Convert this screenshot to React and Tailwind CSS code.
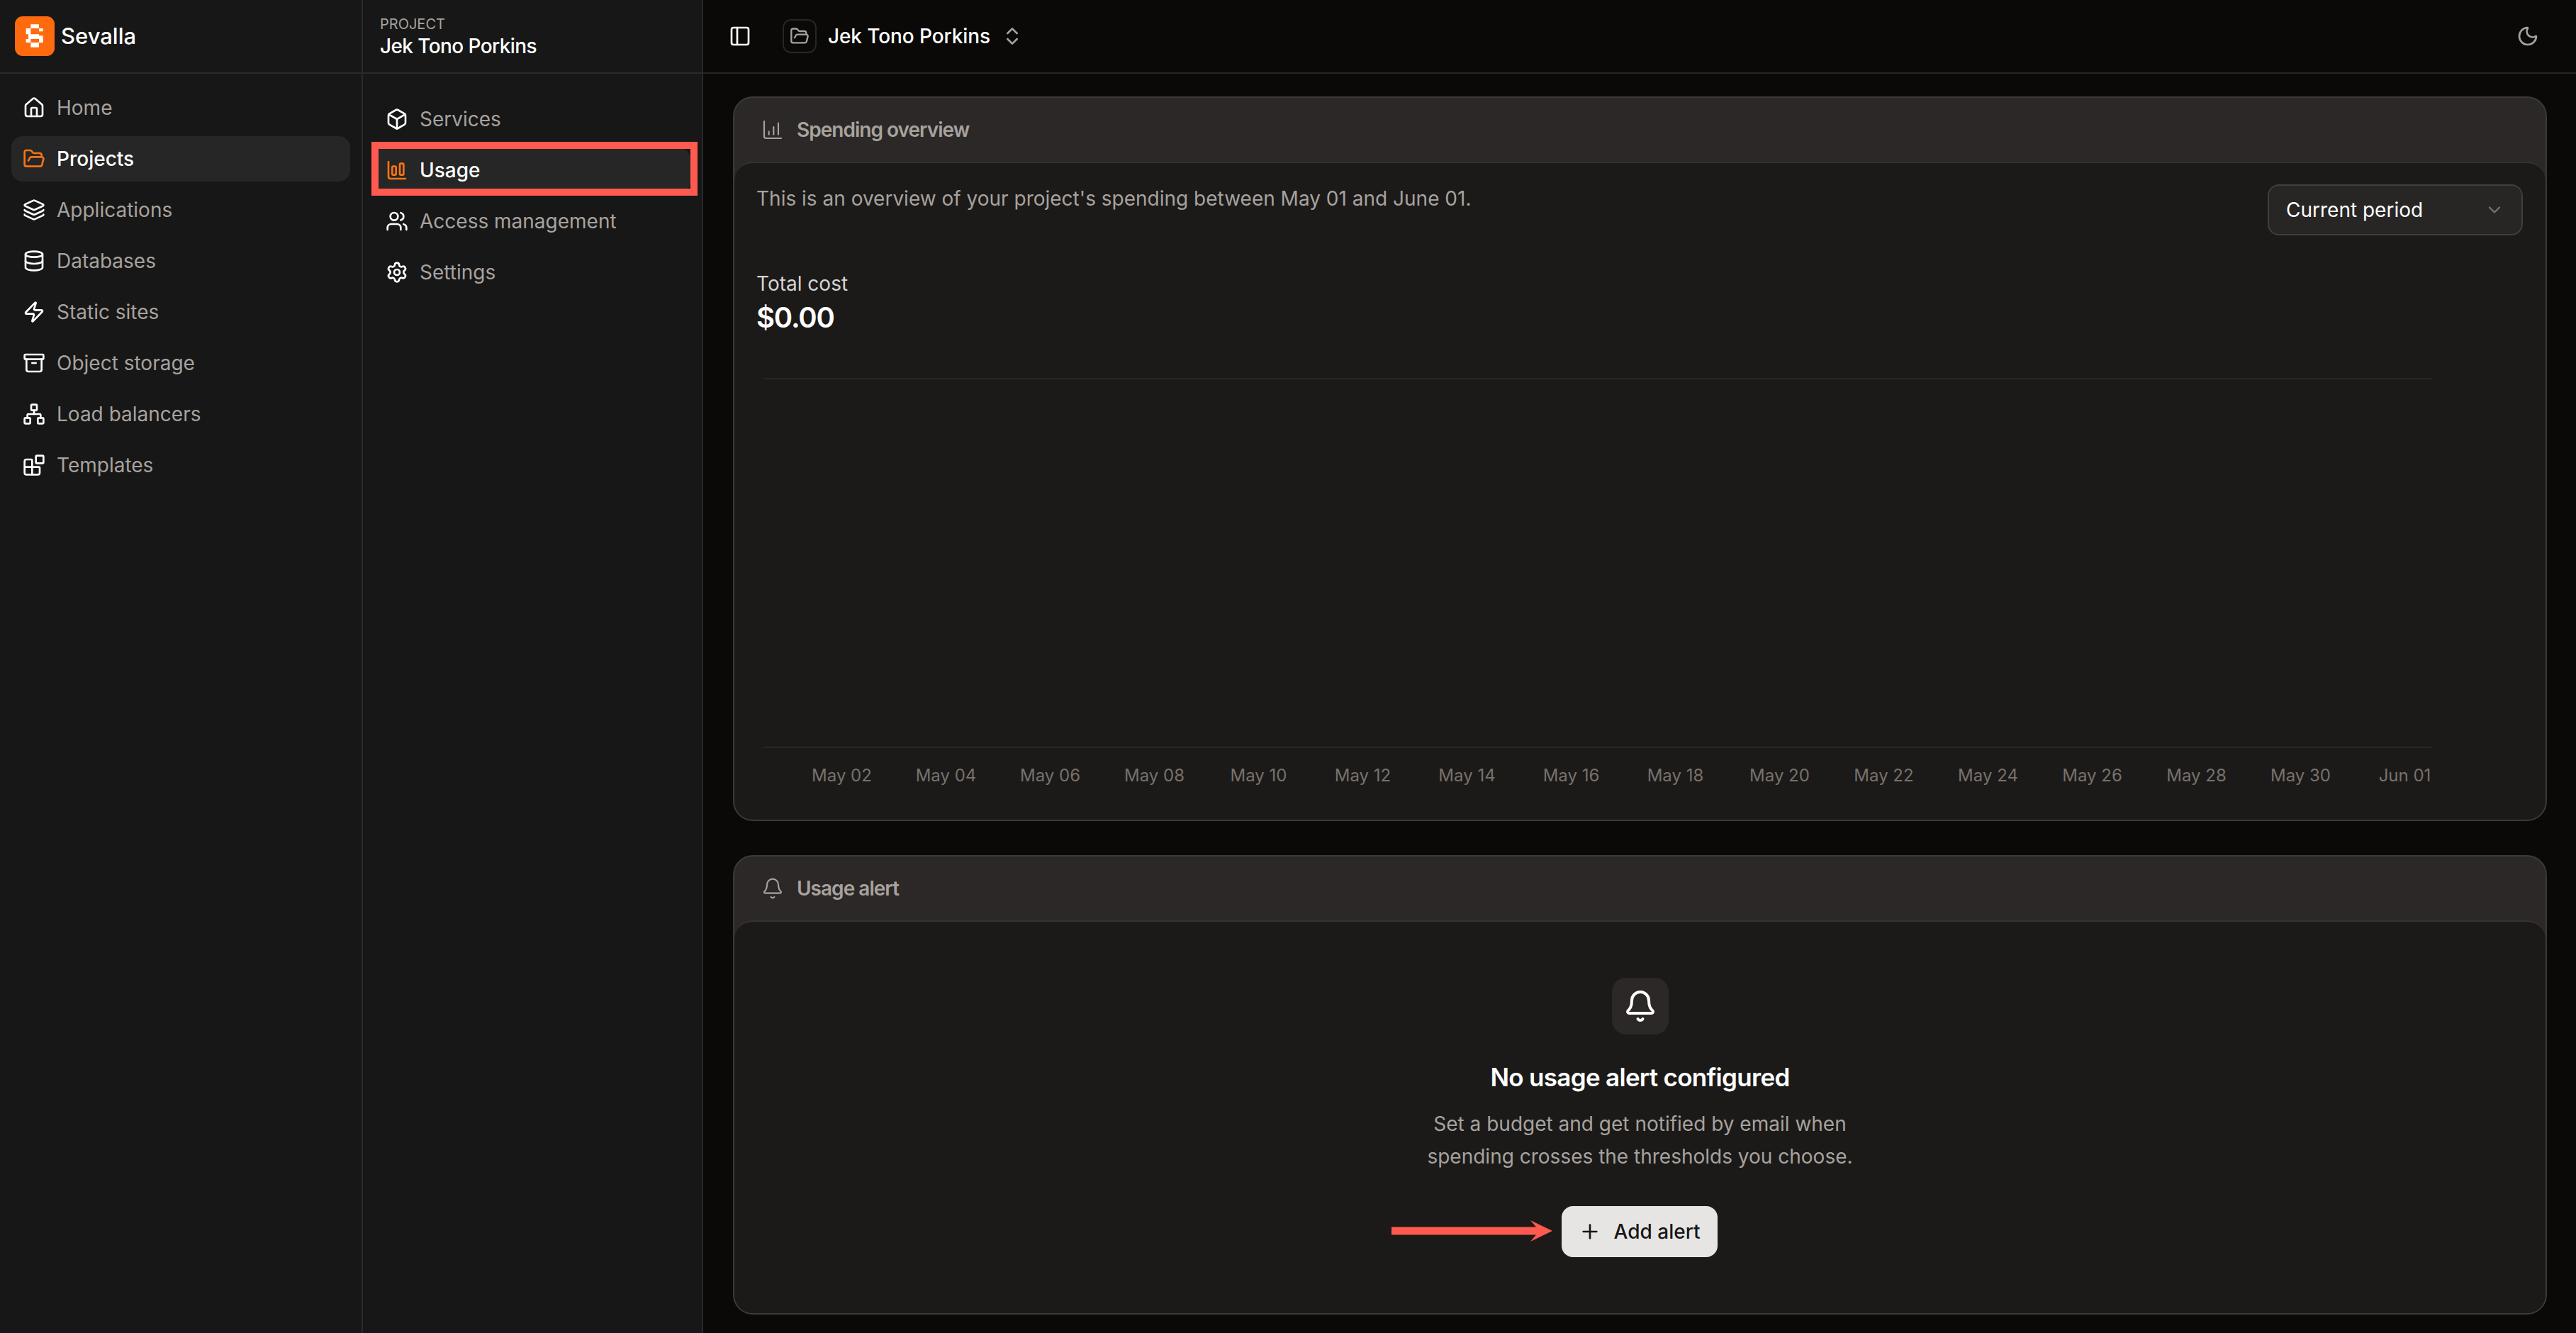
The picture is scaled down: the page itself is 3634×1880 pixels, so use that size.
import { House, FolderOpen, Layers, Database, Zap, Archive, Network, Blocks, Box, ChartColumnBig, ChartColumnIncreasing, Users, Settings, PanelLeft, ChevronsUpDown, Moon, ChevronDown, Bell, Plus } from 'lucide-react';

const mainNav = [
  { label: 'Home', icon: House },
  { label: 'Projects', icon: FolderOpen, active: true },
  { label: 'Applications', icon: Layers },
  { label: 'Databases', icon: Database },
  { label: 'Static sites', icon: Zap },
  { label: 'Object storage', icon: Archive },
  { label: 'Load balancers', icon: Network },
  { label: 'Templates', icon: Blocks },
];

const projectNav = [
  { label: 'Services', icon: Box },
  { label: 'Usage', icon: ChartColumnBig, active: true },
  { label: 'Access management', icon: Users },
  { label: 'Settings', icon: Settings },
];

const days = ['May 02', 'May 04', 'May 06', 'May 08', 'May 10', 'May 12', 'May 14', 'May 16', 'May 18', 'May 20', 'May 22', 'May 24', 'May 26', 'May 28', 'May 30', 'Jun 01'];

function NavItem({ item }) {
  const Icon = item.icon;
  return (
    <div className={`flex items-center h-16 gap-4 pl-4 rounded-2xl text-[28px] ${item.active ? 'bg-[#262626] text-white font-medium' : 'text-[#a8a29e]'}`}>
      <Icon size={32} strokeWidth={2} className={item.active ? 'text-[#f97316] shrink-0' : 'text-white shrink-0'} />
      <span>{item.label}</span>
    </div>
  );
}

function Card({ icon: Icon, title, children }) {
  return (
    <section className="rounded-[28px] border-2 border-[#3a3a3a] bg-[#2c2827]">
      <div className="flex items-center h-[90px] gap-[18px] pl-[38px] text-[28px] font-semibold tracking-[-0.035em] text-[#a8a29e]">
        <Icon size={32} strokeWidth={1.6} className="shrink-0" />
        <span>{title}</span>
      </div>
      <div className="rounded-[26px] border-t-2 border-[#353332] bg-[#1b1a19]">{children}</div>
    </section>
  );
}

export default function App() {
  return (
    <div className="flex h-[1880px] w-[3634px] overflow-hidden bg-[#0a0908] font-['Inter',sans-serif]">
      {/* Main sidebar */}
      <aside className="w-[512px] shrink-0 border-r-2 border-[#2a2a2a] bg-[#171717]">
        <div className="flex items-center h-[104px] gap-[9px] pl-[21px] border-b-2 border-[#2a2a2a]">
          <div className="w-14 h-14 rounded-[11px] bg-[#ff6a0f]">
            <svg width="56" height="56" viewBox="0 0 168 168" fill="#ffffff">
              <path d="M67 34h35v17H67zM47 51h20v25H47zM102 51h17v13h-17zM57 76h45v20H57zM102 82h17v30h-17zM47 96h20v15H47zM67 111h35v20H67z" />
            </svg>
          </div>
          <span className="text-[31px] font-medium text-white">Sevalla</span>
        </div>
        <nav className="flex flex-col gap-2 pt-4 px-4">
          {mainNav.map((item) => (
            <NavItem key={item.label} item={item} />
          ))}
        </nav>
      </aside>

      {/* Project sidebar */}
      <aside className="w-[480px] shrink-0 border-r-2 border-[#2a2a2a] bg-[#171717]">
        <div className="flex flex-col h-[104px] pt-5 pl-6 border-b-2 border-[#2a2a2a]">
          <span className="text-[20px] leading-[28px] text-[#a8a29e]">PROJECT</span>
          <span className="text-[28px] leading-[34px] font-medium tracking-[-0.6px] text-white">Jek Tono Porkins</span>
        </div>
        <nav className="flex flex-col gap-2 pt-8 px-4">
          {projectNav.map((item) => (
            <div key={item.label} className="relative">
              <NavItem item={item} />
              {item.active && <div className="absolute -top-2 -bottom-1 -left-1 -right-[10px] border-[10px] border-[#ff5a4f]" />}
            </div>
          ))}
        </nav>
      </aside>

      {/* Main column */}
      <main className="flex-1 min-w-0">
        <header className="flex items-center h-[104px] pl-[36px] pr-[52px] border-b-2 border-[#262626]">
          <PanelLeft size={32} className="text-white" />
          <div className="flex items-center justify-center w-12 h-12 ml-[44px] rounded-xl border-2 border-[#262626]">
            <FolderOpen size={28} className="text-[#a8a29e]" />
          </div>
          <span className="ml-4 text-[28px] font-medium tracking-[-0.1px] text-white">Jek Tono Porkins</span>
          <ChevronsUpDown size={32} className="ml-[15px] text-[#a8a29e]" />
          <Moon size={32} className="ml-auto text-[#a3a3a3]" />
        </header>

        <div className="flex flex-col gap-12 pt-8 pl-[42px] pr-[41px]">
          <Card icon={ChartColumnIncreasing} title="Spending overview">
            <div className="relative h-[926px] pt-[30px] pl-[31px]">
              <p className="text-[28px] leading-[40px] text-[#a8a29e]">This is an overview of your project's spending between May 01 and June 01.</p>
              <div className="absolute top-[30px] right-[32px] flex items-center justify-between w-[360px] h-[72px] px-6 rounded-2xl border-2 border-[#3f3f3f] bg-[#272625] text-[28px] text-white">
                <span>Current period</span>
                <ChevronDown size={28} className="text-[#78716c]" />
              </div>
              <p className="mt-[80px] text-[28px] leading-[40px] text-[#d6d3d1]">Total cost</p>
              <p className="text-[40px] leading-[56px] font-semibold tracking-[-0.03em] text-white">$0.00</p>
              <div className="ml-[10px] mt-[57px] w-[2353px] h-[522px] border-y-2 border-[#282827]" />
              <div className="grid grid-cols-16 w-[2352px] ml-[47px] mt-[21px] text-center text-[24px] leading-[36px] text-[#78716c]">
                {days.map((d) => (
                  <span key={d}>{d}</span>
                ))}
              </div>
            </div>
          </Card>

          <Card icon={Bell} title="Usage alert">
            <div className="flex flex-col items-center h-[552px] pt-[79px]">
              <div className="flex items-center justify-center w-20 h-20 rounded-[20px] bg-[#2c2827]">
                <Bell size={48} className="text-white" />
              </div>
              <h2 className="mt-[36px] text-[35px] leading-[48px] font-semibold tracking-[-0.02em] text-white">No usage alert configured</h2>
              <p className="mt-[19px] text-center text-[28px] leading-[46px] text-[#a8a29e]">
                Set a budget and get notified by email when
                <br />
                spending crosses the thresholds you choose.
              </p>
              <div className="relative mt-[47px] mr-[2px]">
                <button className="flex items-center justify-center gap-[18px] w-[220px] h-[72px] rounded-2xl bg-[#e7e5e4] text-[28px] font-medium text-[#171717]">
                  <Plus size={32} />
                  <span>Add alert</span>
                </button>
                <svg className="absolute top-[19px] right-[232px]" width="228" height="32" viewBox="0 0 228 32" fill="#ff5a4f">
                  <path d="M0 10.5h204L196 1l31 15-31 15 8-9.5H0z" />
                </svg>
              </div>
            </div>
          </Card>
        </div>
      </main>
    </div>
  );
}
